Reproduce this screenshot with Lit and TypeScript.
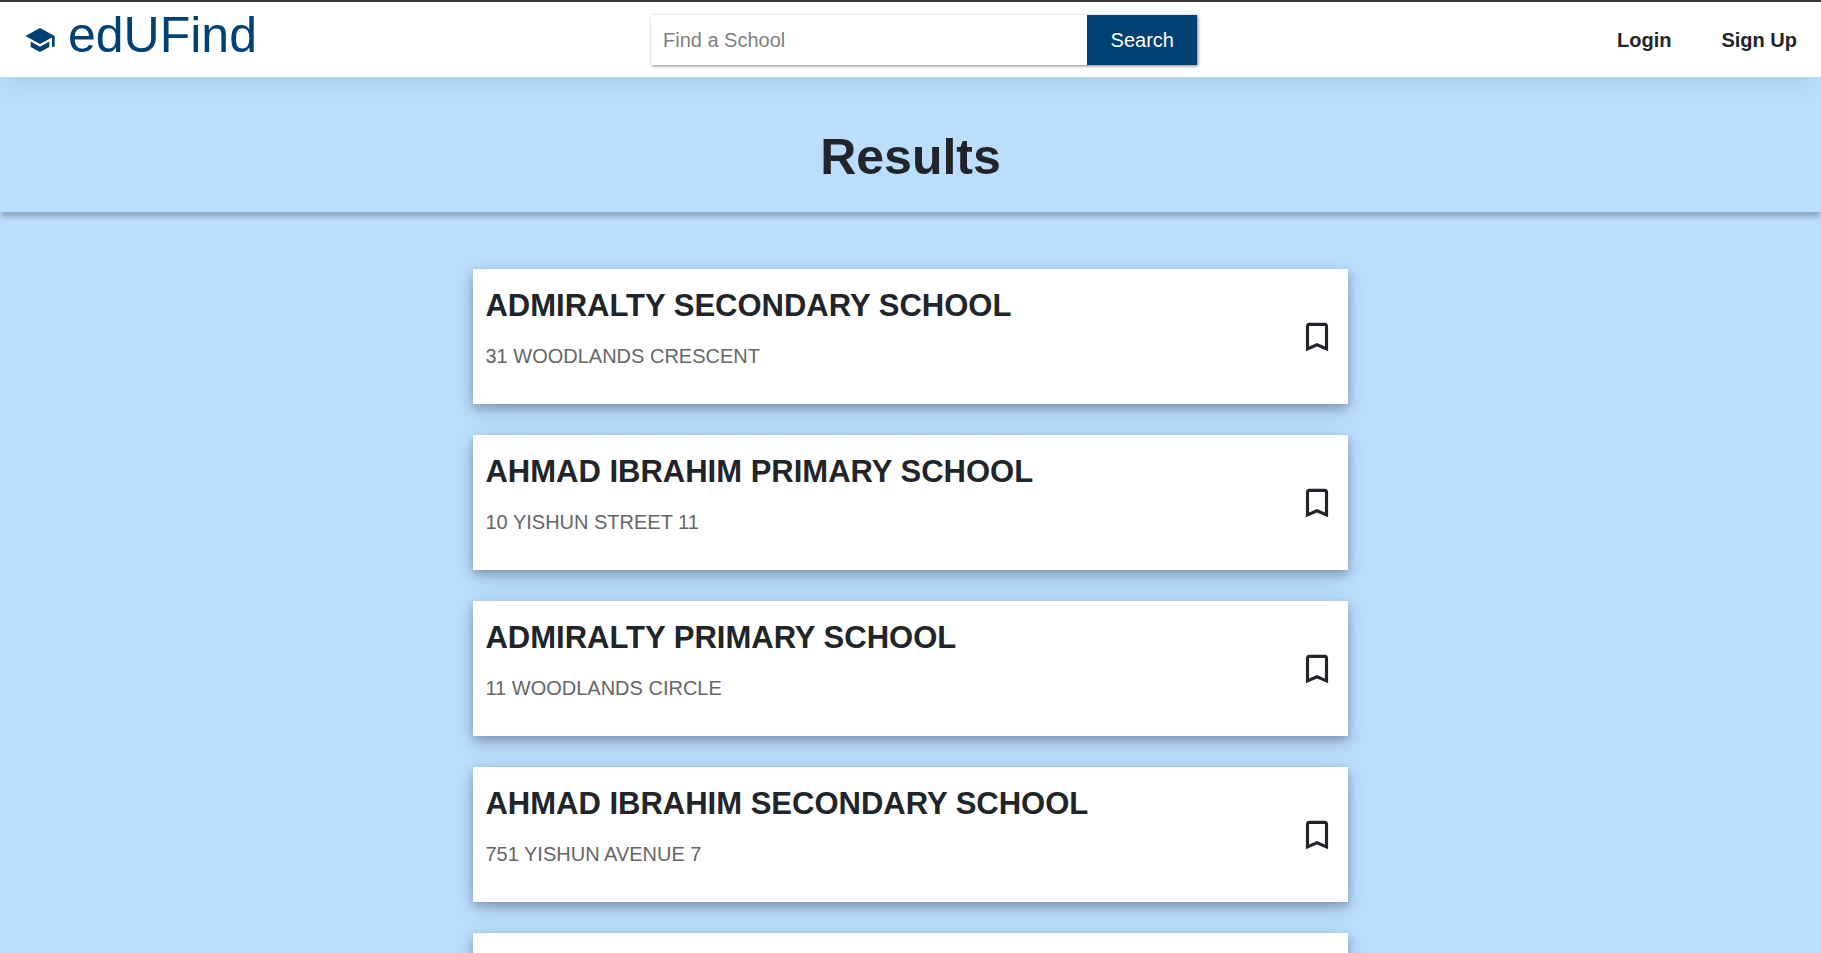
import { LitElement, html, css } from "lit";
import { customElement, state } from "lit/decorators.js";

interface School {
  name: string;
  address: string;
}

const SCHOOLS: School[] = [
  { name: "ADMIRALTY SECONDARY SCHOOL", address: "31 WOODLANDS CRESCENT" },
  { name: "AHMAD IBRAHIM PRIMARY SCHOOL", address: "10 YISHUN STREET 11" },
  { name: "ADMIRALTY PRIMARY SCHOOL", address: "11 WOODLANDS CIRCLE" },
  { name: "AHMAD IBRAHIM SECONDARY SCHOOL", address: "751 YISHUN AVENUE 7" },
  { name: "", address: "" },
];

@customElement("app-root")
export class AppRoot extends LitElement {
  static styles = css`
    :host {
      display: flex;
      flex-direction: column;
      box-sizing: border-box;
      height: 100vh;
      overflow: hidden;
      border-top: 2px solid #3b393c;
      background: #bbdeff;
      color: #212529;
      font-family: "Liberation Sans", Arial, sans-serif;
      font-size: 20px;
      line-height: 30px;
    }
    * {
      box-sizing: border-box;
    }
    .nav {
      flex: none;
      display: grid;
      grid-template-columns: minmax(0, 23fr) 30vw minmax(0, 22fr);
      align-items: center;
      height: 75px;
      padding: 0 24px;
      background: #fff;
      box-shadow: 0 16px 24px -4px rgba(0, 0, 0, 0.06);
    }
    .brand {
      display: flex;
      align-items: center;
      gap: 12px;
      color: #004175;
      text-decoration: none;
    }
    .cap {
      width: 32px;
      height: 32px;
      fill: currentColor;
    }
    .wordmark {
      font-size: 50px;
      line-height: 64px;
      padding-bottom: 10px;
    }
    .search {
      display: flex;
      height: 50px;
      box-shadow: 1px 1px 3px rgba(0, 0, 0, 0.5);
    }
    .query {
      flex: 1;
      min-width: 0;
      border: 0;
      padding: 0 12px;
      font: inherit;
      color: inherit;
      background: #fff;
    }
    .query::placeholder {
      color: #808080;
      opacity: 1;
    }
    .submit {
      width: 110px;
      border: 0;
      background: #004175;
      color: #fff;
      font: inherit;
    }
    .links {
      display: flex;
      justify-content: flex-end;
      gap: 50px;
    }
    .link {
      color: inherit;
      font-weight: bold;
      text-decoration: none;
    }
    .banner {
      flex: none;
      padding: 50px 0 25px;
      text-align: center;
      box-shadow: 0 6px 5px -1px rgba(0, 0, 0, 0.24);
    }
    .title {
      margin: 0;
      font-size: 50px;
      line-height: 60px;
      font-weight: bold;
    }
    .results {
      flex: none;
      display: flex;
      flex-direction: column;
      gap: 31px;
      width: 48%;
      margin: 57px auto 0;
      padding: 0;
      list-style: none;
    }
    .card {
      display: flex;
      align-items: center;
      justify-content: space-between;
      min-height: 135px;
      padding: 0 12px;
      background: #fff;
      box-shadow: 0 4px 8px rgba(0, 0, 0, 0.2), 0 6px 20px rgba(0, 0, 0, 0.19);
    }
    .text {
      padding-bottom: 16px;
    }
    .name {
      margin: 0 0 16px;
      font-size: 31px;
      line-height: 38px;
      font-weight: bold;
    }
    .address {
      margin: 0;
      color: #666;
    }
    .save {
      display: flex;
      padding: 0;
      border: 0;
      background: none;
      color: inherit;
    }
    .mark {
      width: 38px;
      height: 38px;
      fill: currentColor;
    }
  `;

  @state() private saved: Set<string> = new Set();

  private toggle(name: string) {
    const next = new Set(this.saved);
    if (!next.delete(name)) next.add(name);
    this.saved = next;
  }

  private card(s: School) {
    if (!s.name) return html`<li class="card"></li>`;
    const on = this.saved.has(s.name);
    return html`<li class="card">
      <div class="text">
        <h2 class="name">${s.name}</h2>
        <p class="address">${s.address}</p>
      </div>
      <button class="save" aria-label="Bookmark ${s.name}" aria-pressed=${on} @click=${() => this.toggle(s.name)}>
        <svg class="mark" viewBox="0 0 24 24" aria-hidden="true">
          <path
            d=${on
              ? "M17 3H7c-1.100 0-2 .9-2 2v16l7-3 7 3V5c0-1.100-.9-2-2-2z"
              : "M17 3H7c-1.100 0-1.990.9-1.990 2L5 21l7-3 7 3V5c0-1.100-.9-2-2-2zm0 15l-5-2.180L7 18V5h10v13z"}
          />
        </svg>
      </button>
    </li>`;
  }

  render() {
    return html`
      <header class="nav">
        <a class="brand" href="#">
          <svg class="cap" viewBox="0 0 24 24" aria-hidden="true">
            <path d="M5 13.180v4L12 21l7-3.820v-4L12 17l-7-3.820zM12 3L1 9l11 6 9-4.910V17h2V9L12 3z" />
          </svg>
          <span class="wordmark">edUFind</span>
        </a>
        <form class="search" role="search" @submit=${(e: Event) => e.preventDefault()}>
          <input class="query" type="text" aria-label="Find a School" placeholder="Find a School" />
          <button class="submit" type="submit">Search</button>
        </form>
        <nav class="links">
          <a class="link" href="#">Login</a>
          <a class="link" href="#">Sign Up</a>
        </nav>
      </header>
      <section class="banner"><h1 class="title">Results</h1></section>
      <ul class="results">
        ${SCHOOLS.map((s) => this.card(s))}
      </ul>
    `;
  }
}
